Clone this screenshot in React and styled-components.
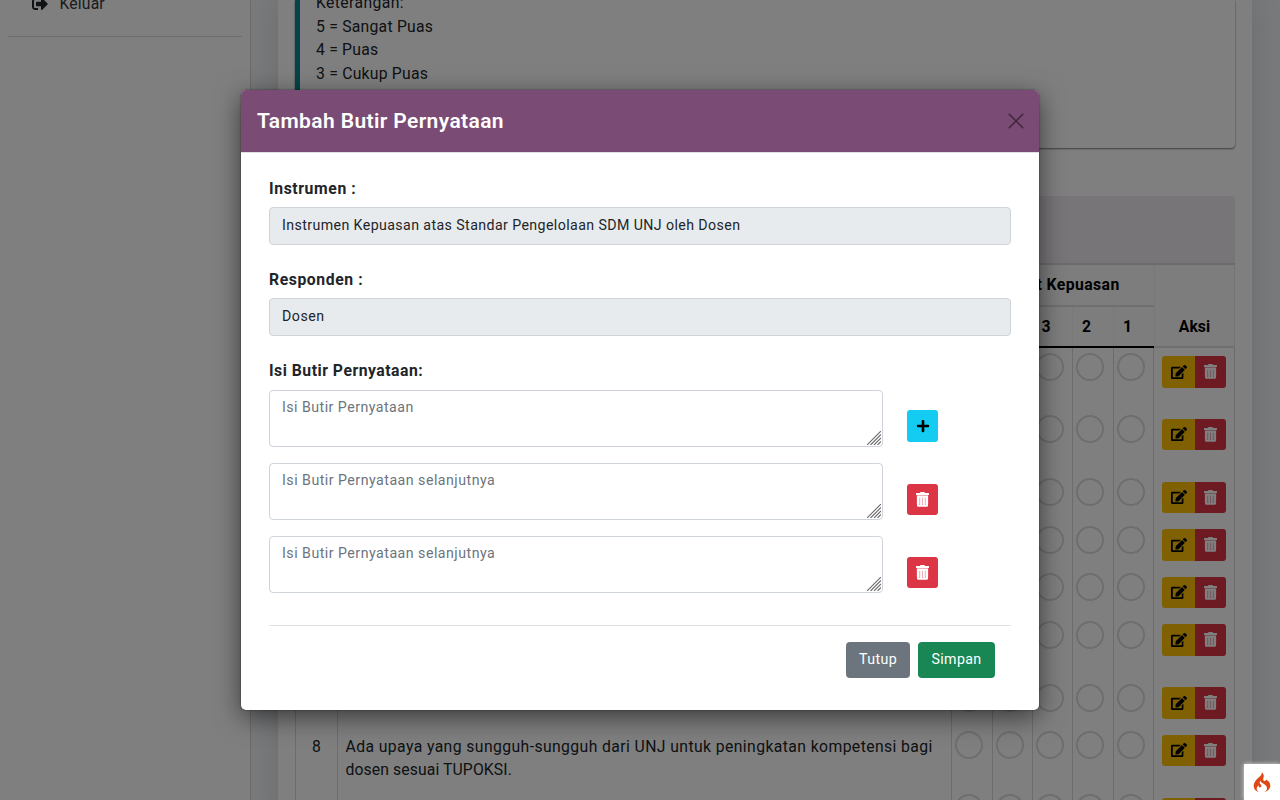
import React from "react";
import styled, { createGlobalStyle } from "styled-components";
import { FaEdit, FaPlus, FaSignOutAlt } from "react-icons/fa";
import { SiCodeigniter } from "react-icons/si";

const GlobalStyle = createGlobalStyle`
  *, *::before, *::after { box-sizing: border-box; }
  body {
    margin: 0;
    font-family: Roboto, "Liberation Sans", sans-serif;
    font-size: 15.75px;
    line-height: 23.6px;
    color: #212529;
    overflow: hidden;
  }
`;

const Screen = styled.div`
  position: relative;
  width: 1280px;
  height: 800px;
  overflow: hidden;
  display: flex;
  background: #f2f4f8;
`;

const Text = styled.span`
  letter-spacing: ${(p) => p.$track || 0}px;
  white-space: nowrap;
`;

const Sidebar = styled.aside`
  width: 251px;
  flex: none;
  padding: 0 8px 0 8px;
  background: #fff;
  border-right: 1px solid #d5d6d9;
`;

const SideLink = styled.a`
  display: flex;
  align-items: center;
  gap: 12px;
  height: 38px;
  margin-top: -1px;
  padding: 0 0 28px 23.5px;
  color: #343a40;
  border-bottom: 1px solid #dcdddf;
  svg { color: #212529; }
`;

const Main = styled.main`
  flex: 1;
  padding: 0 28px 0 27px;
`;

const Sheet = styled.section`
  height: 820px;
  padding: 0 17px;
  background: #fff;
  box-shadow: 0 0 28px rgba(33, 37, 41, 0.15);
`;

const Notice = styled.div`
  height: 148px;
  padding-left: 16px;
  border-left: 5px solid #078a94;
  border-radius: 0 0 4px 4px;
  box-shadow: 0 1px 2px rgba(0, 0, 0, 0.5), 0 0 1px rgba(0, 0, 0, 0.25);
`;

const NoticeLines = styled.div`
  display: flex;
  flex-direction: column;
  margin-top: -8.8px;
`;

const NoticeFrame = styled.div`
  display: flow-root;
`;

const TableCard = styled.div`
  margin-top: 48px;
`;

const CardHead = styled.div`
  height: 69px;
  background: #f0ebf1;
  border-bottom: 2px solid #d5d7da;
  border-radius: 4px 4px 0 0;
`;

const columns = "42px 614px 41px 40px 40px 41px 40px 82px";

const HeadGrid = styled.div`
  display: grid;
  grid-template-columns: 656px 203px 81px;
  height: 83px;
  background: #fafafa;
  color: #000;
  font-weight: 700;
  text-align: center;
`;

const HeadBlank = styled.div`
  border-bottom: 2px solid #000;
`;

const HeadScores = styled.div`
  display: grid;
  grid-template-rows: 42px 41px;
  line-height: 40px;
`;

const ScoreTitle = styled.div`
  border-bottom: 2px solid #dcdee1;
`;

const ScoreNumbers = styled.div`
  display: grid;
  grid-template-columns: 41px 40px 40px 41px 41px;
  border-bottom: 2px solid #000;
  line-height: 39px;
  span { padding-right: 13px; }
  span + span { border-left: 1px solid #f3f3f3; }
`;

const HeadAction = styled.div`
  padding-top: 42px;
  line-height: 39px;
  border-left: 1px solid #f0f0f0;
  border-right: 1px solid #e6e8ea;
  border-bottom: 2px solid #dcdee1;
`;

const Row = styled.div`
  display: grid;
  grid-template-columns: ${columns};
  height: ${(p) => p.$height}px;
`;

const Cell = styled.div`
  border-left: 1px solid #d6d8da;
  padding: 8px 7.5px;
  line-height: 23.2px;
  align-items: ${(p) => (p.$center ? "center" : "flex-start")};
  display: flex;
  flex-direction: column;
`;

const RadioCell = styled.div`
  border-left: 1px solid #d6d8da;
  padding: ${(p) => p.$top - 0.2}px 0 0 2.8px;
`;

const Radio = styled.div`
  width: 28.5px;
  height: 28.5px;
  border: 2px solid #dcdcdc;
  border-radius: 50%;
`;

const ActionCell = styled.div`
  display: flex;
  align-items: flex-start;
  padding: 8px 0 0 8px;
  border-left: 1px solid #d6d8da;
  border-right: 1px solid #d6d8da;
`;

const MiniButton = styled.button`
  display: flex;
  align-items: center;
  justify-content: center;
  width: ${(p) => p.$width || 31}px;
  height: ${(p) => p.$height || 31}px;
  padding: 0 0 1px;
  border: 0;
  border-radius: ${(p) => p.$radius || "3px"};
  background: ${(p) => p.$bg};
  color: ${(p) => p.$fg || "#fff"};
`;

const Overlay = styled.div`
  position: absolute;
  inset: 0;
  display: flex;
  justify-content: center;
  align-items: flex-start;
  padding-top: 90px;
  background: rgba(0, 0, 0, 0.5);
`;

const Dialog = styled.div`
  width: 798px;
  height: 620px;
  background: #fff;
  border-radius: 5px;
  box-shadow: 0 7px 26px rgba(0, 0, 0, 0.55), 0 0 2px rgba(0, 0, 0, 0.5);
`;

const DialogHead = styled.header`
  display: flex;
  align-items: center;
  justify-content: space-between;
  height: 63px;
  padding: 0 15px 0 16px;
  background: #7a4b74;
  background-clip: padding-box;
  border-bottom: 1px solid #dee2e6;
  border-radius: 5px 5px 0 0;
  color: #fff;
  font-size: 21px;
  line-height: 24px;
  font-weight: 600;
`;

const DialogBody = styled.form`
  padding: 24px 28px 0;
`;

const Label = styled.label`
  display: block;
  height: 24px;
  margin-bottom: ${(p) => p.$gap || 6}px;
  font-weight: 700;
  line-height: 24px;
`;

const Field = styled.div`
  display: flex;
  align-items: center;
  height: 38px;
  margin-bottom: 23px;
  padding: 0 12px 1px;
  border: 1px solid #ced4da;
  border-radius: 4px;
  background: #e7ebee;
  font-size: 14.2px;
`;

const EntryRow = styled.div`
  display: flex;
  gap: 24px;
  margin-bottom: 16px;
`;

const AreaFrame = styled.div`
  position: relative;
  svg {
    position: absolute;
    right: 2px;
    bottom: 2px;
  }
`;

const Area = styled.textarea`
  display: block;
  width: 614px;
  height: 57px;
  padding: 6px 12px;
  border: 1px solid #ced4da;
  border-radius: 4px;
  resize: none;
  font: 14.2px/21px Roboto, "Liberation Sans", sans-serif;
  letter-spacing: ${(p) => p.$track}px;
  &::placeholder { color: #6c757d; opacity: 1; }
`;

const EntryAction = styled.div`
  padding-top: ${(p) => p.$top}px;
`;

const DialogFoot = styled.footer`
  display: flex;
  justify-content: flex-end;
  gap: 8px;
  margin-top: 32px;
  padding: 16px 16px 0;
  border-top: 1px solid #dee2e6;
`;

const Button = styled.button`
  width: ${(p) => p.$width}px;
  height: 36px;
  padding: 0 0 2px;
  border: 0;
  border-radius: 4px;
  background: ${(p) => p.$bg};
  color: #fff;
  font: 14.2px Roboto, "Liberation Sans", sans-serif;
`;

const DebugBadge = styled.div`
  position: absolute;
  right: 0;
  bottom: 0;
  display: flex;
  align-items: center;
  justify-content: center;
  width: 36px;
  height: 36px;
  background: #fff;
  color: #dd4814;
  box-shadow: 0 0 4px #dfdfdf;
`;

const rows = [
  { height: 63, button: 32, top: 5 },
  { height: 63, button: 31, top: 4 },
  { height: 47, button: 31, top: 4 },
  { height: 48, button: 32, top: 5 },
  { height: 47, button: 31, top: 4 },
  { height: 63, button: 32, top: 5 },
  { height: 48, button: 32, top: 5 },
  {
    height: 63,
    button: 31,
    top: 4,
    number: 8,
    lines: [
      ["Ada upaya yang sungguh-sungguh dari UNJ untuk peningkatan kompetensi bagi", 0.4],
      ["dosen sesuai TUPOKSI.", 0.1],
    ],
  },
  { height: 63, button: 32, top: 4 },
];

const entries = [
  { placeholder: "Isi Butir Pernyataan", top: 20, add: true, track: 0.46 },
  { placeholder: "Isi Butir Pernyataan selanjutnya", top: 21, track: 0.48 },
  { placeholder: "Isi Butir Pernyataan selanjutnya", top: 21, track: 0.48 },
];

function TrashIcon() {
  return (
    <svg width="13" height="15" viewBox="0 0 13 15" fill="currentColor">
      <path d="M4 1 4.5 0h4L9 1h3.5q.5 0 .5.5V3H0V1.5Q0 1 .5 1z" />
      <path d="M.8 3h11.4v9H.8z" opacity=".6" />
      <path fillRule="evenodd" d="M1 4h11v9.5q0 1.2-1.2 1.2H2.2Q1 14.700 1 13.500zM3.200 5.800v6.700h1V5.800zM6 5.800v6.700h1V5.800zM8.800 5.800v6.700h1V5.800z" />
    </svg>
  );
}

function ResizeGrip() {
  return (
    <svg width="14" height="14" viewBox="0 0 14 14" fill="none" stroke="#6a6a6a" strokeWidth="1.1">
      <path d="M0 14 14 0M3.500 14 14 3.500M7 14 14 7M10.500 14 14 10.500" />
    </svg>
  );
}

function TableRow({ row }) {
  return (
    <Row $height={row.height}>
      <Cell $center>{row.number}</Cell>
      <Cell>
        {(row.lines || []).map(([text, track]) => (
          <Text key={text} $track={track}>{text}</Text>
        ))}
      </Cell>
      {[5, 4, 3, 2, 1].map((score) => (
        <RadioCell key={score} $top={row.top}>
          <Radio />
        </RadioCell>
      ))}
      <ActionCell>
        <MiniButton $bg="#ffc107" $fg="#000" $width={33} $height={row.button} $radius="3px 0 0 3px">
          <FaEdit size={16} />
        </MiniButton>
        <MiniButton $bg="#dc3545" $height={row.button} $radius="0 3px 3px 0">
          <TrashIcon />
        </MiniButton>
      </ActionCell>
    </Row>
  );
}

export default function App() {
  return (
    <>
      <GlobalStyle />
      <Screen>
        <Sidebar>
          <SideLink>
            <FaSignOutAlt size={16} />
            <Text $track={0.15}>Keluar</Text>
          </SideLink>
        </Sidebar>
        <Main>
          <Sheet>
            <NoticeFrame>
              <Notice>
                <NoticeFrame>
                  <NoticeLines>
                    <Text $track={0.38}>Keterangan:</Text>
                    <Text $track={0.23}>5 = Sangat Puas</Text>
                    <Text $track={0.2}>4 = Puas</Text>
                    <Text $track={0.22}>3 = Cukup Puas</Text>
                  </NoticeLines>
                </NoticeFrame>
              </Notice>
            </NoticeFrame>
            <TableCard>
              <CardHead />
              <HeadGrid>
                <HeadBlank />
                <HeadScores>
                  <ScoreTitle><Text $track={0.42}>Tingkat Kepuasan</Text></ScoreTitle>
                  <ScoreNumbers>
                    <span>5</span><span>4</span><span>3</span><span>2</span><span>1</span>
                  </ScoreNumbers>
                </HeadScores>
                <HeadAction>Aksi</HeadAction>
              </HeadGrid>
              {rows.map((row, i) => <TableRow key={i} row={row} />)}
            </TableCard>
          </Sheet>
        </Main>
        <Overlay>
          <Dialog role="dialog">
            <DialogHead>
              <Text $track={0.38}>Tambah Butir Pernyataan</Text>
              <svg width="16" height="16" viewBox="0 0 16 16" stroke="#3d263a" strokeWidth="1.5" strokeLinecap="round">
                <path d="M1.2 1.2 14.8 14.8M14.8 1.2 1.2 14.8" />
              </svg>
            </DialogHead>
            <DialogBody>
              <Label><Text $track={0.6}>Instrumen :</Text></Label>
              <Field><Text $track={0.4}>Instrumen Kepuasan atas Standar Pengelolaan SDM UNJ oleh Dosen</Text></Field>
              <Label><Text $track={0.58}>Responden :</Text></Label>
              <Field><Text $track={0.5}>Dosen</Text></Field>
              <Label $gap={7}><Text $track={0.5}>Isi Butir Pernyataan:</Text></Label>
              {entries.map((entry, i) => (
                <EntryRow key={i}>
                  <AreaFrame>
                    <Area placeholder={entry.placeholder} $track={entry.track} />
                    <ResizeGrip />
                  </AreaFrame>
                  <EntryAction $top={entry.top}>
                    {entry.add ? (
                      <MiniButton type="button" $bg="#14ccf2" $fg="#000" $height={32}><FaPlus size={14} /></MiniButton>
                    ) : (
                      <MiniButton type="button" $bg="#dc3545"><TrashIcon /></MiniButton>
                    )}
                  </EntryAction>
                </EntryRow>
              ))}
              <DialogFoot>
                <Button type="button" $bg="#6c757d" $width={64}><Text $track={0.4}>Tutup</Text></Button>
                <Button type="button" $bg="#198754" $width={77}><Text $track={0.4}>Simpan</Text></Button>
              </DialogFoot>
            </DialogBody>
          </Dialog>
        </Overlay>
        <DebugBadge><SiCodeigniter size={20} /></DebugBadge>
      </Screen>
    </>
  );
}
